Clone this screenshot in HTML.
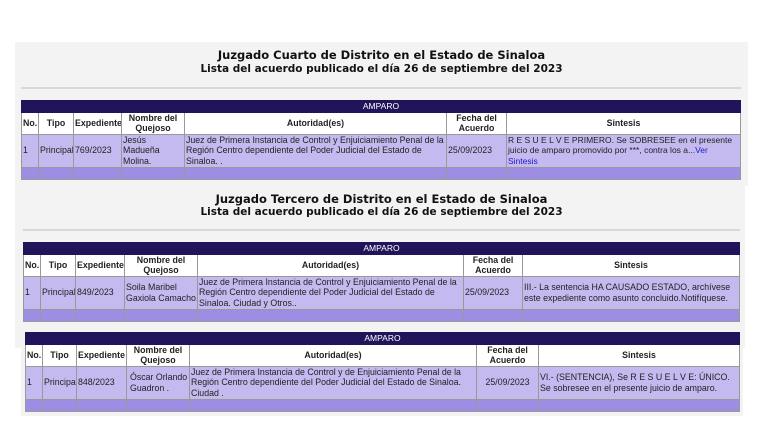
<!DOCTYPE html>
<html><head><meta charset="utf-8"><style>
*{margin:0;padding:0;box-sizing:border-box}
body{width:768px;height:432px;background:#fff;position:relative;overflow:hidden;font-family:"Liberation Sans",Arial,sans-serif;color:#222}
.p{position:absolute;background:#f3f3f3}
.t{position:absolute;text-align:center;font-family:"DejaVu Sans",Verdana,sans-serif;font-weight:bold;color:#111}
.hr{position:absolute;height:2px;background:#d8d8d8}
table{position:absolute;border-collapse:collapse;table-layout:fixed;font-size:8.8px;line-height:10.5px;border:1px solid #555}
td{border:1px solid #999;padding:0 1px;vertical-align:middle;overflow:hidden}
.bar td{background:#21145a;color:#fff;height:11px;font-size:8.5px;border-color:#21145a}
.h td{background:#fff;font-weight:bold;text-align:center;height:22px}
.d td{background:#c5baf0;height:33px}
.f td{background:#9e8ee3;height:12px}
a{color:#1a1acc}
</style></head><body>
<div class="p" style="left:15px;top:42px;width:733px;height:144px"></div>
<div class="t" style="left:15px;top:48px;width:733px;font-size:11.5px">Juzgado Cuarto de Distrito en el Estado de Sinaloa</div>
<div class="t" style="left:15px;top:63px;width:733px;font-size:10.5px">Lista del acuerdo publicado el día 26 de septiembre del 2023</div>
<div class="hr" style="left:21px;top:87px;width:720px"></div>
<table style="left:21px;top:100px;width:720px">
<colgroup><col style="width:17px"><col style="width:35px"><col style="width:48px"><col style="width:63px"><col style="width:262px"><col style="width:60px"><col></colgroup>
<tr class="bar"><td colspan="7" style="text-align:center;padding:0">AMPARO</td></tr>
<tr class="h"><td>No.</td><td>Tipo</td><td>Expediente</td><td>Nombre del Quejoso</td><td>Autoridad(es)</td><td>Fecha del Acuerdo</td><td>Sintesis</td></tr>
<tr class="d"><td>1</td><td>Principal</td><td>769/2023</td><td>Jesús Madueña Molina.</td><td>Juez de Primera Instancia de Control y Enjuiciamiento Penal de la Región Centro dependiente del Poder Judicial del Estado de Sinaloa. .</td><td>25/09/2023</td><td style="font-size:8.5px">R E S U E L V E PRIMERO. Se SOBRESEE en el presente juicio de amparo promovido por ***, contra los a...<a>Ver Sintesis</a></td></tr>
<tr class="f"><td></td><td></td><td></td><td></td><td></td><td></td><td></td></tr>
</table>

<div class="p" style="left:15px;top:186px;width:730px;height:162px"></div>
<div class="p" style="left:21px;top:340px;width:722px;height:76px"></div>
<div class="t" style="left:15px;top:192px;width:733px;font-size:11.5px">Juzgado Tercero de Distrito en el Estado de Sinaloa</div>
<div class="t" style="left:15px;top:206px;width:733px;font-size:10.5px">Lista del acuerdo publicado el día 26 de septiembre del 2023</div>
<div class="hr" style="left:23px;top:229px;width:717px"></div>
<table style="left:23px;top:242px;width:717px">
<colgroup><col style="width:17px"><col style="width:35px"><col style="width:49px"><col style="width:73px"><col style="width:266px"><col style="width:59px"><col></colgroup>
<tr class="bar"><td colspan="7" style="text-align:center;padding:0">AMPARO</td></tr>
<tr class="h"><td>No.</td><td>Tipo</td><td>Expediente</td><td>Nombre del Quejoso</td><td>Autoridad(es)</td><td>Fecha del Acuerdo</td><td>Sintesis</td></tr>
<tr class="d"><td>1</td><td>Principal</td><td>849/2023</td><td style="white-space:nowrap">Soila Maribel<br>Gaxiola Camacho.</td><td>Juez de Primera Instancia de Control y Enjuiciamiento Penal de la Región Centro dependiente del Poder Judicial del Estado de Sinaloa. Ciudad y Otros..</td><td>25/09/2023</td><td>III.- La sentencia HA CAUSADO ESTADO, archívese este expediente como asunto concluido.Notifíquese.</td></tr>
<tr class="f"><td></td><td></td><td></td><td></td><td></td><td></td><td></td></tr>
</table>
<table style="left:25px;top:332px;width:715px">
<colgroup><col style="width:17px"><col style="width:34px"><col style="width:50px"><col style="width:63px"><col style="width:287px"><col style="width:62px"><col></colgroup>
<tr class="bar"><td colspan="7" style="text-align:center;padding:0">AMPARO</td></tr>
<tr class="h"><td>No.</td><td>Tipo</td><td>Expediente</td><td>Nombre del Quejoso</td><td>Autoridad(es)</td><td>Fecha del Acuerdo</td><td>Sintesis</td></tr>
<tr class="d"><td>1</td><td>Principal</td><td>848/2023</td><td style="padding-left:3px">Óscar Orlando Guadron .</td><td>Juez de Primera Instancia de Control y de Enjuiciamiento Penal de la Región Centro dependiente del Poder Judicial del Estado de Sinaloa. Ciudad .</td><td style="text-align:center">25/09/2023</td><td>VI.- (SENTENCIA), Se R E S U E L V E: ÚNICO. Se sobresee en el presente juicio de amparo.</td></tr>
<tr class="f"><td></td><td></td><td></td><td></td><td></td><td></td><td></td></tr>
</table>
</body></html>
